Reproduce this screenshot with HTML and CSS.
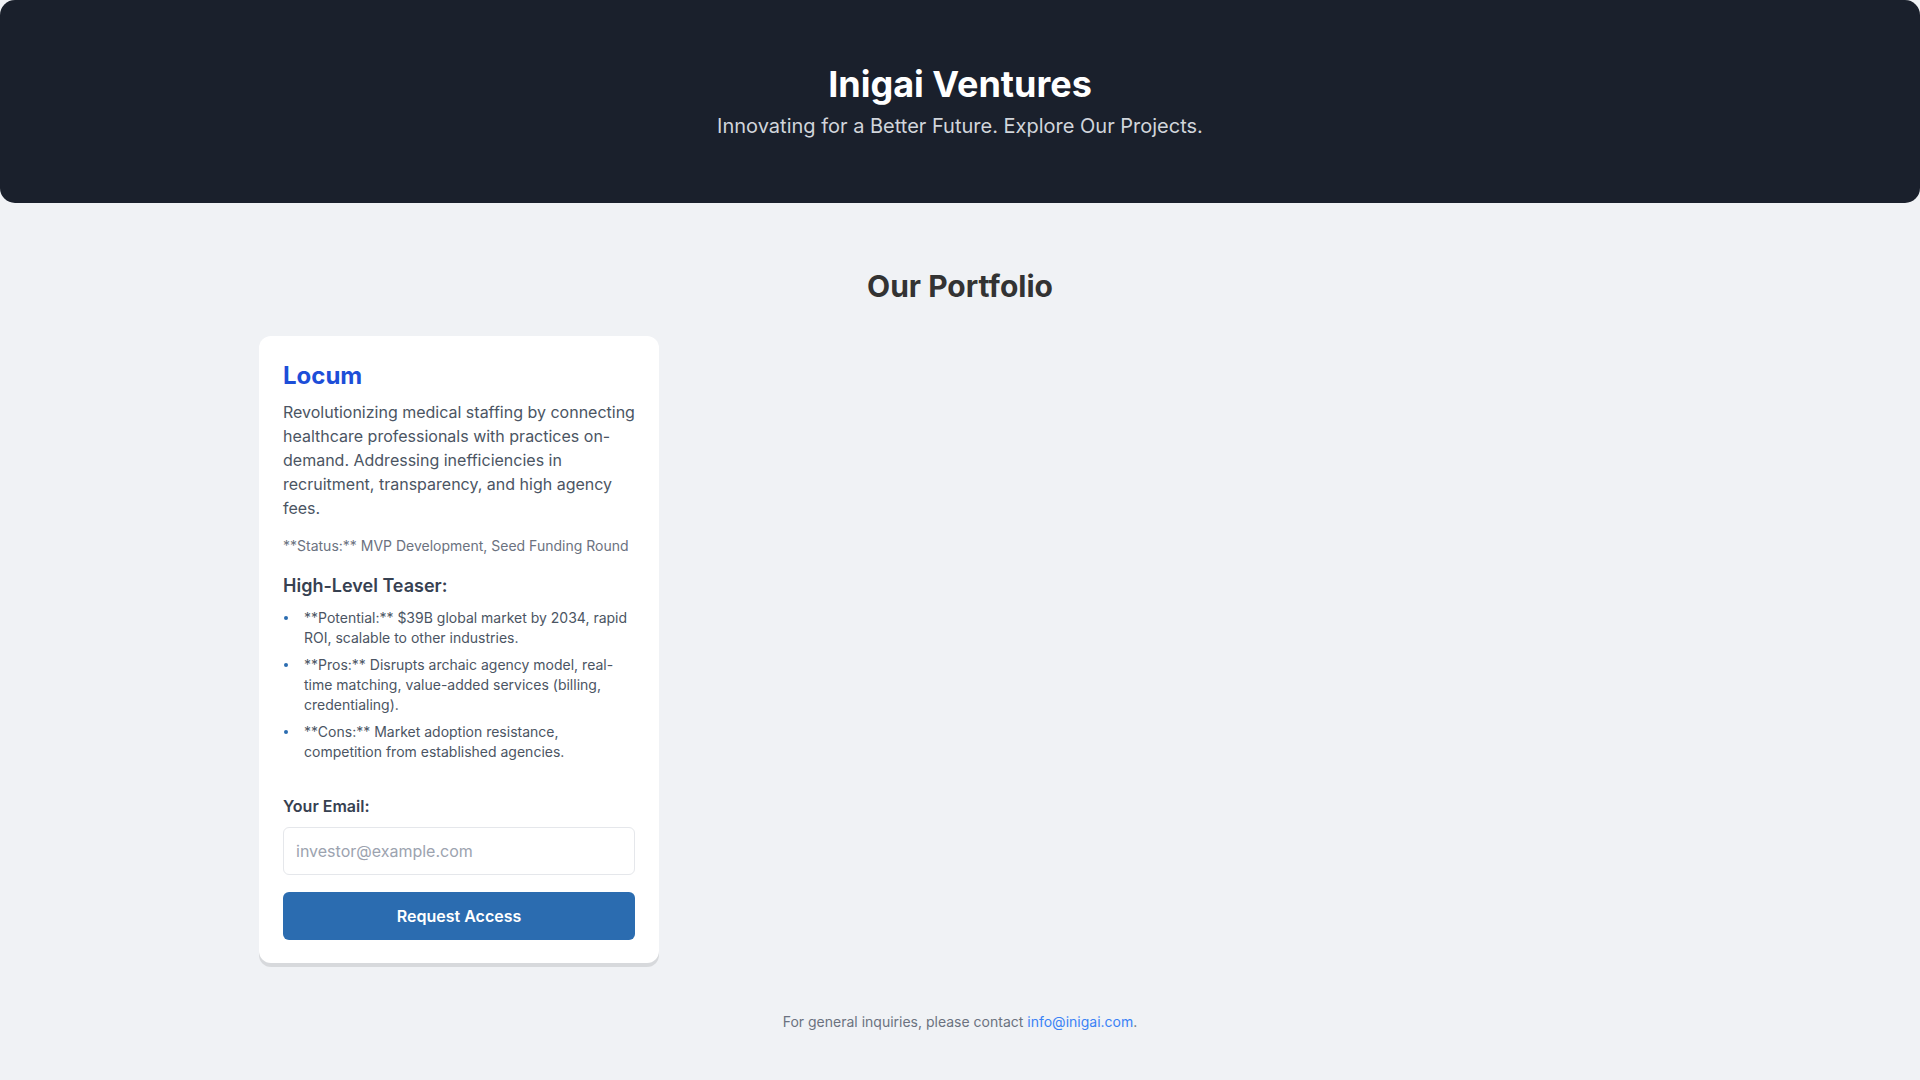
FILE: index.html
```html
<!DOCTYPE html>
<html lang="en">
<head>
<meta charset="utf-8">
<title>Inigai Ventures</title>
<link rel="stylesheet" href="styles.css">
</head>
<body>
<header class="hero">
  <h1 class="hero-title">Inigai Ventures</h1>
  <p class="hero-sub">Innovating for a Better Future. Explore Our Projects.</p>
</header>
<main class="main">
  <h2 class="section-title">Our Portfolio</h2>
  <div class="grid">
    <article class="card">
      <h3 class="card-title">Locum</h3>
      <p class="card-desc">Revolutionizing medical staffing by connecting healthcare professionals with practices on-demand. Addressing inefficiencies in recruitment, transparency, and high agency fees.</p>
      <p class="card-status">**Status:** MVP Development, Seed Funding Round</p>
      <h4 class="card-sub">High-Level Teaser:</h4>
      <ul class="teaser">
        <li>**Potential:** $39B global market by 2034, rapid ROI, scalable to other industries.</li>
        <li>**Pros:** Disrupts archaic agency model, real-time matching, value-added services (billing, credentialing).</li>
        <li>**Cons:** Market adoption resistance, competition from established agencies.</li>
      </ul>
      <form class="access-form" onsubmit="return false;">
        <label class="form-label" for="email">Your Email:</label>
        <input class="form-input" id="email" type="email" placeholder="investor@example.com">
        <button class="form-btn" type="submit">Request Access</button>
      </form>
    </article>
  </div>
</main>
<footer class="footer">
  For general inquiries, please contact <a class="footer-link" href="#">info@inigai.com</a>.
</footer>
</body>
</html>
```

FILE: styles.css
```css
* { box-sizing: border-box; }
html, body { margin: 0; padding: 0; }
body {
  background: #f0f2f5;
  font-family: Inter, "Noto Sans", sans-serif;
  color: #333;
}
.hero {
  background: #1a202c;
  border-radius: 15px;
  padding: 60px 20px 63px;
  text-align: center;
}
.hero-title {
  margin: 0;
  font-size: 36px;
  line-height: 48px;
  font-weight: 700;
  color: #ffffff;
}
.hero-sub {
  margin: 4px 0 0;
  font-size: 20px;
  line-height: 28px;
  color: #d1d5db;
}
.main {
  max-width: 1402px;
  margin: 0 auto;
  padding: 65px 0 0;
}
.section-title {
  margin: 0 0 32px;
  text-align: center;
  font-size: 30px;
  line-height: 36px;
  font-weight: 700;
  color: #333333;
}
.grid {
  display: grid;
  grid-template-columns: repeat(auto-fill, 400px);
  gap: 32px;
}
.card {
  background: #ffffff;
  border-radius: 12px;
  padding: 24px 24px 23px;
  box-shadow: 0 4px 0 rgba(0, 0, 0, 0.1);
}
.card-title {
  margin: 0 0 8px;
  font-size: 24px;
  line-height: 32px;
  font-weight: 700;
  color: #1d4ed8;
}
.card-desc {
  margin: 0 0 16px;
  font-size: 16px;
  line-height: 24px;
  color: #4b5563;
}
.card-status {
  margin: 0 0 16px;
  font-size: 14px;
  line-height: 20px;
  color: #6b7280;
}
.card-sub {
  margin: 0 0 8px;
  font-size: 18px;
  line-height: 28px;
  font-weight: 600;
  color: #374151;
}
.teaser {
  list-style: none;
  margin: 0;
  padding: 0;
}
.teaser li {
  display: flex;
  font-size: 14px;
  line-height: 20px;
  color: #4b5563;
  margin-bottom: 7px;
}
.teaser li:last-child { margin-bottom: 0; }
.teaser li::before {
  content: "";
  flex: 0 0 4px;
  width: 4px;
  height: 4px;
  border-radius: 50%;
  background: #2b6cb0;
  margin: 8px 16px 0 1px;
}
.access-form {
  margin-top: 32px;
  display: flex;
  flex-direction: column;
}
.form-label {
  font-size: 16px;
  line-height: 24px;
  font-weight: 600;
  color: #374151;
  margin-bottom: 9px;
}
.form-input {
  height: 48px;
  width: 100%;
  padding: 0 12px;
  border: 1px solid #e5e7eb;
  border-radius: 6px;
  font-family: Inter, "Noto Sans", sans-serif;
  font-size: 16px;
  color: #374151;
  background: #ffffff;
  outline: none;
}
.form-input::placeholder { color: #9ca3af; }
.form-btn {
  margin-top: 17px;
  height: 48px;
  width: 100%;
  border: none;
  border-radius: 6px;
  background: #2b6cb0;
  color: #ffffff;
  font-family: Inter, "Noto Sans", sans-serif;
  font-size: 16px;
  font-weight: 600;
  cursor: pointer;
}
.footer {
  text-align: center;
  padding: 49px 0 42px;
  font-size: 14px;
  line-height: 20px;
  color: #6b7280;
}
.footer-link {
  color: #3b82f6;
  text-decoration: none;
}
```
